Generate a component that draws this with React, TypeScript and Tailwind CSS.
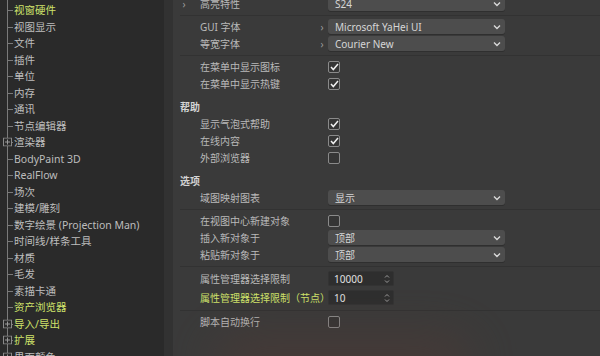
const font = { fontFamily: '"Noto Sans", "Noto Sans CJK SC", sans-serif' };

const treeItems = [
  { label: "视窗硬件", hl: true },
  { label: "视图显示" },
  { label: "文件" },
  { label: "插件" },
  { label: "单位" },
  { label: "内存" },
  { label: "通讯" },
  { label: "节点编辑器" },
  { label: "渲染器", box: true },
  { label: "BodyPaint 3D" },
  { label: "RealFlow" },
  { label: "场次" },
  { label: "建模/雕刻" },
  { label: "数字绘景 (Projection Man)" },
  { label: "时间线/样条工具" },
  { label: "材质" },
  { label: "毛发" },
  { label: "素描卡通" },
  { label: "资产浏览器", hl: true },
  { label: "导入/导出", hl: true, box: true },
  { label: "扩展", hl: true, box: true },
  { label: "界面颜色", box: true },
];

function TreeRow({ label, hl, box }: { label: string; hl?: boolean; box?: boolean }) {
  return (
    <div className="relative flex h-[16.5px] items-center whitespace-nowrap pl-[14px]">
      <span className="absolute left-[7px] top-1/2 h-px w-[6px] bg-[#7a7a7a]" />
      {box && (
        <svg className="absolute left-[3px] top-1/2 -translate-y-1/2" width="9" height="9" viewBox="0 0 9 9">
          <rect x="0.5" y="0.5" width="8" height="8" fill="#2a2a2a" stroke="#8a8a8a" />
          <path d="M2 4.5h5M4.5 2v5" stroke="#9a9a9a" />
        </svg>
      )}
      <span className={hl ? "text-[#cfe26a]" : "text-[#bdbdbd]"}>{label}</span>
    </div>
  );
}

function Chevron() {
  return (
    <svg width="8" height="6" viewBox="0 0 8 6">
      <path d="M1 1.5l3 3 3-3" fill="none" stroke="#d8d8d8" strokeWidth="1.4" />
    </svg>
  );
}

function Select({ value }: { value: string }) {
  return (
    <div className="flex h-[15px] w-[177px] items-center justify-between rounded-[3px] bg-[#4d4d4d] pl-[7px] pr-[4px] text-[#d6d6d6] shadow-[0_1px_0_#2f2f2f]">
      <span>{value}</span>
      <Chevron />
    </div>
  );
}

function Check({ on }: { on?: boolean }) {
  return (
    <div className="flex h-[12px] w-[12px] items-center justify-center rounded-[2px] border border-[#8a8a8a] bg-[#353535]">
      {on && (
        <svg width="9" height="8" viewBox="0 0 9 8">
          <path d="M1 4l2.3 2.5L8 1" fill="none" stroke="#f0f0f0" strokeWidth="1.5" />
        </svg>
      )}
    </div>
  );
}

function NumInput({ value }: { value: string }) {
  return (
    <div className="flex h-[15px] w-[66px] items-center justify-between rounded-[2px] border border-[#333] bg-[#2e2e2e] pl-[5px] pr-[3px] text-[#e0e0e0]">
      <span>{value}</span>
      <svg width="6" height="10" viewBox="0 0 6 10">
        <path d="M1 3.5l2-2 2 2M1 6.5l2 2 2-2" fill="none" stroke="#9a9a9a" strokeWidth="1" />
      </svg>
    </div>
  );
}

function Row({ label, children, hl, h = "h-[17px]", arrow }: { label: string; children?: React.ReactNode; hl?: boolean; h?: string; arrow?: boolean }) {
  return (
    <div className={`flex ${h} items-center`}>
      <div className={`w-[143px] whitespace-nowrap pl-[26px] ${hl ? "text-[#cfe26a]" : "text-[#b9b9b9]"}`}>{label}</div>
      <div className="flex w-[10px] justify-center text-[#9a9a9a]">{arrow ? "›" : ""}</div>
      <div className="pl-[1px]">{children}</div>
    </div>
  );
}

function Sep() {
  return (
    <div className="flex h-[6px] items-center pl-[6px]">
      <div className="h-px w-full bg-[#323232]" />
    </div>
  );
}

function Header({ label }: { label: string }) {
  return (
    <div className="flex h-[23px] items-end">
      <div className="flex h-[17px] items-center pl-[6px] font-bold text-[#d4d4d4]">{label}</div>
    </div>
  );
}

export default function App() {
  return (
    <div className="flex h-[356px] w-[600px] overflow-hidden text-[10px] leading-none" style={font}>
      <div className="relative w-[164px] bg-[#2a2a2a] pt-[2px] text-[10.5px]">
        <span className="absolute left-[7px] top-0 h-full w-px bg-[#7a7a7a]" />
        {treeItems.map((t) => (
          <TreeRow key={t.label} {...t} />
        ))}
      </div>
      <div className="w-[9px] bg-[#323232]" />
      <div className="relative flex-1 bg-[#3a3a3a] pl-[1px]">
        <div className="-mt-[5px] flex flex-col">
          <div className="flex h-[17px] items-center">
            <div className="flex w-[16px] justify-center pl-[4px] text-[#9a9a9a]">›</div>
            <div className="w-[127px] pl-[10px] text-[#b9b9b9]">高亮特性</div>
            <div className="w-[10px]" />
            <div className="pl-[1px]"><Select value="S24" /></div>
          </div>
          <Sep />
          <Row label="GUI 字体" arrow><Select value="Microsoft YaHei UI" /></Row>
          <Row label="等宽字体" arrow><Select value="Courier New" /></Row>
          <Sep />
          <Row label="在菜单中显示图标"><Check on /></Row>
          <Row label="在菜单中显示热键"><Check on /></Row>
          <Header label="帮助" />
          <Row label="显示气泡式帮助"><Check on /></Row>
          <Row label="在线内容"><Check on /></Row>
          <Row label="外部浏览器"><Check /></Row>
          <Header label="选项" />
          <Row label="域图映射图表"><Select value="显示" /></Row>
          <Sep />
          <Row label="在视图中心新建对象"><Check /></Row>
          <Row label="插入新对象于"><Select value="顶部" /></Row>
          <Row label="粘贴新对象于"><Select value="顶部" /></Row>
          <Sep />
          <Row label="属性管理器选择限制" h="h-[19px]"><NumInput value="10000" /></Row>
          <Row label="属性管理器选择限制（节点）" h="h-[19px]" hl><NumInput value="10" /></Row>
          <Sep />
          <Row label="脚本自动换行"><Check /></Row>
        </div>
        <div className="pointer-events-none absolute bottom-[-30px] left-[40px] h-[50px] w-[260px] rounded-full bg-[#5a3a32] opacity-40 blur-xl" />
      </div>
    </div>
  );
}
